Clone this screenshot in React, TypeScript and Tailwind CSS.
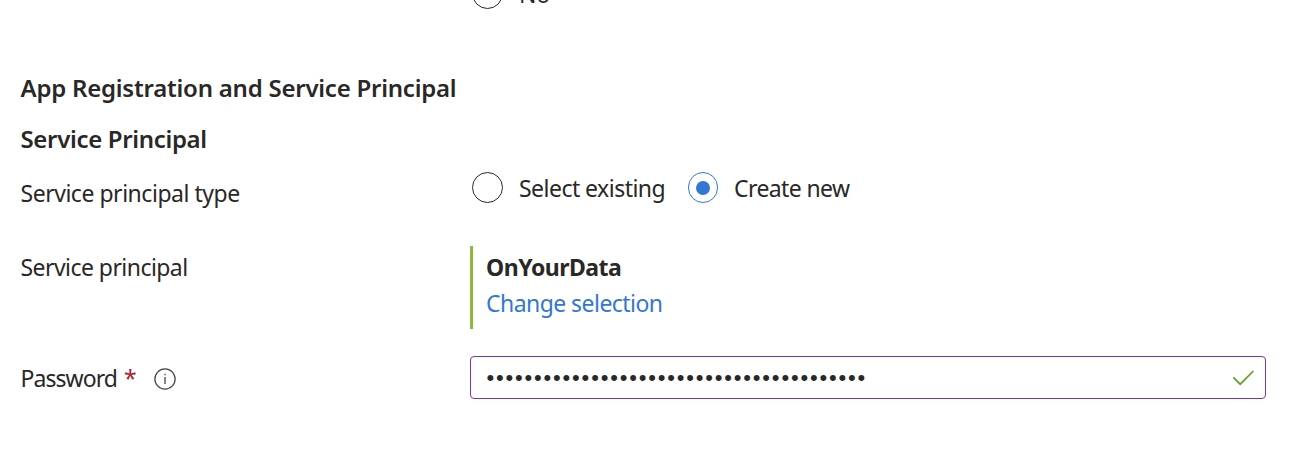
import React from "react";

function Radio({ checked = false }: { checked?: boolean }) {
  return checked ? (
    <span className="flex h-[31px] w-[30px] shrink-0 items-center justify-center rounded-full border border-[#3277d1]">
      <span className="h-[14px] w-[14px] rounded-full bg-[#3277d1]" />
    </span>
  ) : (
    <span className="h-[31px] w-[31px] shrink-0 rounded-full border border-[#292827]" />
  );
}

export default function App() {
  return (
    <main className="flex h-[452px] w-[1290px] flex-col overflow-hidden bg-white font-['Noto_Sans',sans-serif] text-[23px] leading-8 whitespace-nowrap text-[#292827]">
      <div className="-mt-[22px] ml-[472px] flex h-[31px] shrink-0 items-center gap-4">
        <Radio />
        <span className="tracking-[-0.3px]">No</span>
      </div>
      <h2 className="mt-[63px] ml-[20.5px] h-8 shrink-0 text-[24px] font-semibold tracking-[-0.23px]">
        App Registration and Service Principal
      </h2>
      <h3 className="mt-[19px] ml-[20.5px] h-8 shrink-0 text-[24px] font-semibold tracking-[-0.33px]">
        Service Principal
      </h3>
      <div className="mt-[17px] ml-[20.5px] flex h-[38px] shrink-0">
        <span className="w-[451.5px] pt-[5px] tracking-[-0.47px]">Service principal type</span>
        <div className="flex h-[31px] items-center">
          <Radio />
          <span className="ml-4 w-[169px] tracking-[-0.53px]">Select existing</span>
          <Radio checked />
          <span className="ml-4 tracking-[-0.6px]">Create new</span>
        </div>
      </div>
      <div className="mt-[36px] ml-[20.5px] flex h-[83px] shrink-0">
        <span className="w-[449.5px] pt-[5px] tracking-[-0.55px]">Service principal</span>
        <div className="flex flex-col border-l-[3px] border-[#8cb936] pt-[5px] pl-[13px]">
          <strong className="h-9 font-bold tracking-[-0.5px]">OnYourData</strong>
          <a href="#" className="tracking-[-0.55px] text-[#3277d1]">Change selection</a>
        </div>
      </div>
      <div className="mt-[27px] ml-[20.5px] flex h-[43px] shrink-0 items-center">
        <div className="flex w-[449.5px] items-center pt-px">
          <span className="w-[103.5px] tracking-[-0.95px]">Password</span>
          <span className="w-[29.5px] text-[#a4262c]">*</span>
          <svg className="mt-px size-[22px]" viewBox="0 0 22 22" fill="none" stroke="#484644">
            <circle cx="11" cy="11" r="10.1" strokeWidth="1.3" />
            <path d="M11 9v7M11 5.7v1.6" strokeWidth="1.3" />
          </svg>
        </div>
        <div className="flex h-[43px] w-[796px] items-center justify-between rounded-[4px] border border-[#8032a0] pr-[11px] pl-[15.5px]">
          <span className="font-['Liberation_Sans',sans-serif] text-[22px] tracking-[1.81px]">••••••••••••••••••••••••••••••••••••••••</span>
          <svg className="h-[16px] w-[22px]" viewBox="0 0 22 16" fill="none" stroke="#5ea226" strokeWidth="1.7">
            <path d="M1.3 7.3 8.2 14.2 21.4 1" />
          </svg>
        </div>
      </div>
    </main>
  );
}
